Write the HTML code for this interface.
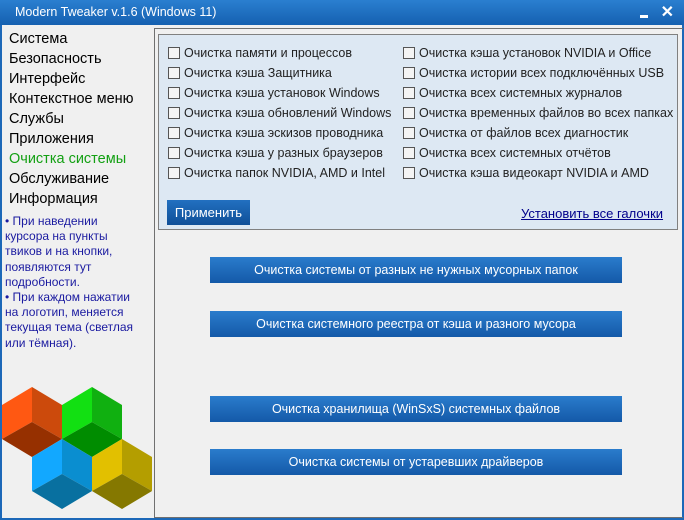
<!DOCTYPE html>
<html><head><meta charset="utf-8"><style>
*{margin:0;padding:0;box-sizing:border-box}
body{width:684px;height:520px;overflow:hidden;background:#f0f0f0;font-family:"Liberation Sans",sans-serif;position:relative}
.title{position:absolute;left:0;top:0;width:684px;height:25px;background:linear-gradient(#2a7fd0,#1560b0);color:#fff;font-size:12.5px;line-height:25px;padding-left:15px}
.win{position:absolute;left:0;top:25px;width:684px;height:495px;border:2px solid #1c68b8;border-top:none}
.menu{position:absolute;left:9px;top:29px;font-size:14.5px;line-height:20px;color:#000}
.note{position:absolute;left:5px;top:214px;width:136px;font-size:12px;line-height:15.2px;color:#1a1aa0}
.panel{position:absolute;left:154px;top:28px;width:529px;height:490px;border:1px solid #707070;border-right:none}
.box{position:absolute;left:158px;top:34px;width:520px;height:196px;background:#dde8f3;border:1px solid #808080}
.cb{position:absolute;font-size:12.5px;color:#222;height:16px;line-height:16px;white-space:nowrap}
.cb i{display:inline-block;width:12px;height:12px;border:1px solid #555;background:#f4f4f4;vertical-align:-2px;margin-right:4px}
.apply{position:absolute;left:167px;top:200px;width:83px;height:25px;background:linear-gradient(#2270c0,#0f4f98);color:#fff;font-size:13px;line-height:25px;text-align:center}
.link{position:absolute;left:521px;top:206px;font-size:13px;color:#00008b;text-decoration:underline}
.btn{position:absolute;left:210px;width:412px;height:26px;background:linear-gradient(#2a7ccc,#1459a8);color:#fff;font-size:12.5px;line-height:26px;text-align:center}
.x{position:absolute;right:10px;top:0;color:#fff;font-size:16px;font-weight:bold;line-height:25px}
.mn{position:absolute;left:640px;top:15px;width:8px;height:3px;background:#fff}
</style></head><body>
<div class="title">Modern Tweaker v.1.6 (Windows 11)</div>
<div class="mn"></div><div class="x">✕</div>
<div class="win"></div>
<div class="menu">Система<br>Безопасность<br>Интерфейс<br>Контекстное меню<br>Службы<br>Приложения<br><span style="color:#13a013">Очистка системы</span><br>Обслуживание<br>Информация</div>
<div class="note">• При наведении курсора на пункты твиков и на кнопки, появляются тут подробности.<br>• При каждом нажатии на логотип, меняется текущая тема (светлая или тёмная).</div>
<svg style="position:absolute;left:0;top:380px" width="154" height="140">
<polygon points="32,7 2,25 2,59 32,42" fill="#ff5812"/><polygon points="32,7 62,25 62,59 32,42" fill="#cc4a0c"/><polygon points="2,59 32,42 62,59 32,77" fill="#963000"/>
<polygon points="92,7 62,25 62,59 92,42" fill="#12e012"/><polygon points="92,7 122,25 122,59 92,42" fill="#10b010"/><polygon points="62,59 92,42 122,59 92,77" fill="#008c00"/>
<polygon points="62,59 32,77 32,111 62,94" fill="#12a8ff"/><polygon points="62,59 92,77 92,111 62,94" fill="#0a8ed0"/><polygon points="32,111 62,94 92,111 62,129" fill="#0870a0"/>
<polygon points="122,59 92,77 92,111 122,94" fill="#e2c000"/><polygon points="122,59 152,77 152,111 122,94" fill="#b49e00"/><polygon points="92,111 122,94 152,111 122,129" fill="#857800"/>
</svg>
<div class="panel"></div>
<div class="box"></div>
<div class="cb" style="left:168px;top:45px"><i></i>Очистка памяти и процессов</div>
<div class="cb" style="left:168px;top:65px"><i></i>Очистка кэша Защитника</div>
<div class="cb" style="left:168px;top:85px"><i></i>Очистка кэша установок Windows</div>
<div class="cb" style="left:168px;top:105px"><i></i>Очистка кэша обновлений Windows</div>
<div class="cb" style="left:168px;top:125px"><i></i>Очистка кэша эскизов проводника</div>
<div class="cb" style="left:168px;top:145px"><i></i>Очистка кэша у разных браузеров</div>
<div class="cb" style="left:168px;top:165px"><i></i>Очистка папок NVIDIA, AMD и Intel</div>
<div class="cb" style="left:403px;top:45px"><i></i>Очистка кэша установок NVIDIA и Office</div>
<div class="cb" style="left:403px;top:65px"><i></i>Очистка истории всех подключённых USB</div>
<div class="cb" style="left:403px;top:85px"><i></i>Очистка всех системных журналов</div>
<div class="cb" style="left:403px;top:105px"><i></i>Очистка временных файлов во всех папках</div>
<div class="cb" style="left:403px;top:125px"><i></i>Очистка от файлов всех диагностик</div>
<div class="cb" style="left:403px;top:145px"><i></i>Очистка всех системных отчётов</div>
<div class="cb" style="left:403px;top:165px"><i></i>Очистка кэша видеокарт NVIDIA и AMD</div>
<div class="apply">Применить</div>
<div class="link">Установить все галочки</div>
<div class="btn" style="top:257px">Очистка системы от разных не нужных мусорных папок</div>
<div class="btn" style="top:311px">Очистка системного реестра от кэша и разного мусора</div>
<div class="btn" style="top:396px">Очистка хранилища (WinSxS) системных файлов</div>
<div class="btn" style="top:449px">Очистка системы от устаревших драйверов</div>
</body></html>
